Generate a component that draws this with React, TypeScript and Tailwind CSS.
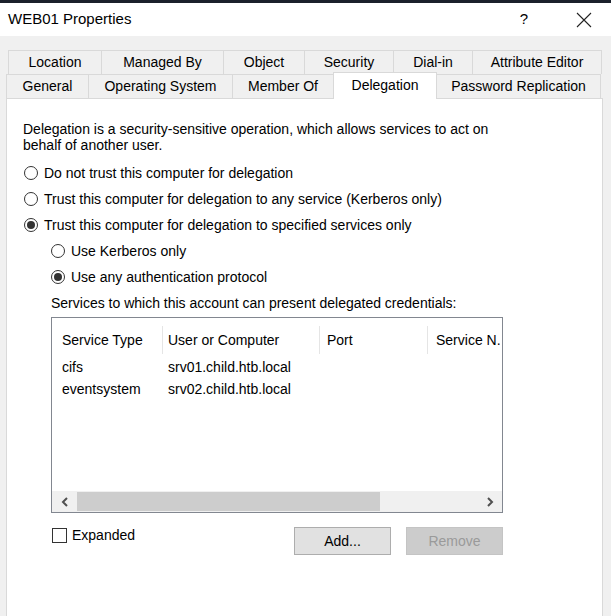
import React from 'react';

function Radio({ checked, label, indent }: { checked?: boolean; label: string; indent?: boolean }) {
  return (
    <div className={`flex items-center h-[26px] ${indent ? 'pl-[28px]' : 'pl-[1px]'}`}>
      <span className="w-[14px] h-[14px] rounded-full border border-[#333333] bg-white flex items-center justify-center shrink-0">
        {checked && <span className="w-[8px] h-[8px] rounded-full bg-[#333333]" />}
      </span>
      <span className="ml-[6px] whitespace-nowrap">{label}</span>
    </div>
  );
}

const topTabs = [
  { label: 'Location', w: 'w-[93px]' },
  { label: 'Managed By', w: 'w-[122px]' },
  { label: 'Object', w: 'w-[81px]' },
  { label: 'Security', w: 'w-[89px]' },
  { label: 'Dial-in', w: 'w-[79px]' },
  { label: 'Attribute Editor', w: 'w-[130px]' },
];

export default function App() {
  return (
    <div className="w-[611px] h-[616px] overflow-hidden bg-[#f0f0f0] text-[14px] text-black font-['Liberation_Sans',Arial,sans-serif]">
      <div className="h-[3px] bg-[#1b202b]" />

      {/* Title bar */}
      <div className="h-[33px] bg-white flex items-center pl-[8px]">
        <span className="text-[15px]">WEB01 Properties</span>
        <span className="ml-auto text-[15px] mr-[48px]">?</span>
        <svg width="16" height="16" viewBox="0 0 16 16" className="mr-[19px]">
          <path d="M1 1 L15 15 M15 1 L1 15" stroke="#222" strokeWidth="1.1" />
        </svg>
      </div>

      {/* Tabs */}
      <div className="pt-[14px]">
        <div className="flex pl-[8px] h-[24px]">
          {topTabs.map((t, i) => (
            <div
              key={t.label}
              className={`${t.w} h-full flex items-center justify-center border-t border-l border-[#d9d9d9] ${i === topTabs.length - 1 ? 'border-r' : ''}`}
            >
              {t.label}
            </div>
          ))}
        </div>
        <div className="flex pl-[6px] h-[24px] items-start">
          <div className="w-[82px] h-full flex items-center justify-center border-t border-l border-[#d9d9d9]">General</div>
          <div className="w-[144px] h-full flex items-center justify-center border-t border-l border-[#d9d9d9]">Operating System</div>
          <div className="w-[101px] h-full flex items-center justify-center border-t border-l border-[#d9d9d9]">Member Of</div>
          <div className="relative z-10 w-[104px] h-[27px] -mt-[2px] bg-white flex items-start pt-[2px] justify-center border-t border-x border-[#d9d9d9]">
            Delegation
          </div>
          <div className="w-[164px] h-full flex items-center justify-center border-t border-r border-[#d9d9d9]">Password Replication</div>
        </div>

        {/* Panel */}
        <div className="mx-[6px] w-[597px] h-[530px] bg-white border border-[#d9d9d9] pl-[16px] pt-[22px]">
          <p className="leading-[16px] w-[500px]">
            Delegation is a security-sensitive operation, which allows services to act on behalf of another user.
          </p>

          <div className="mt-[7px]">
            <Radio label="Do not trust this computer for delegation" />
            <Radio label="Trust this computer for delegation to any service (Kerberos only)" />
            <Radio checked label="Trust this computer for delegation to specified services only" />
            <Radio indent label="Use Kerberos only" />
            <Radio indent checked label="Use any authentication protocol" />
          </div>

          <div className="h-[26px] flex items-center pl-[28px]">Services to which this account can present delegated credentials:</div>

          {/* List view */}
          <div className="ml-[28px] mt-[1px] w-[452px] h-[196px] border border-[#828790] flex flex-col overflow-hidden">
            <div className="h-[38px] pt-[8px] pb-[2px] flex shrink-0">
              <div className="w-[111px] h-full flex items-center pl-[10px] border-r border-[#e5e5e5]">Service Type</div>
              <div className="w-[157px] h-full flex items-center pl-[5px] border-r border-[#e5e5e5]">User or Computer</div>
              <div className="w-[108px] h-full flex items-center pl-[7px] border-r border-[#e5e5e5]">Port</div>
              <div className="flex-1 h-full flex items-center pl-[8px] whitespace-nowrap overflow-hidden">Service N.</div>
            </div>
            <div className="h-[22px] flex items-center shrink-0">
              <span className="w-[111px] pl-[10px]">cifs</span>
              <span className="pl-[5px]">srv01.child.htb.local</span>
            </div>
            <div className="h-[22px] flex items-center shrink-0">
              <span className="w-[111px] pl-[10px]">eventsystem</span>
              <span className="pl-[5px]">srv02.child.htb.local</span>
            </div>
            <div className="flex-1" />
            {/* Horizontal scrollbar */}
            <div className="h-[21px] bg-[#f0f0f0] flex items-stretch shrink-0">
              <div className="w-[25px] flex items-center justify-center">
                <svg width="8" height="10" viewBox="0 0 8 10">
                  <path d="M6 1 L2 5 L6 9" stroke="#505050" strokeWidth="2" fill="none" />
                </svg>
              </div>
              <div className="w-[303px] my-[1px] bg-[#cdcdcd]" />
              <div className="flex-1" />
              <div className="w-[25px] flex items-center justify-center">
                <svg width="8" height="10" viewBox="0 0 8 10">
                  <path d="M2 1 L6 5 L2 9" stroke="#505050" strokeWidth="2" fill="none" />
                </svg>
              </div>
            </div>
          </div>

          {/* Bottom controls */}
          <div className="ml-[29px] w-[451px] mt-[14px] flex items-start">
            <div className="flex items-center h-[16px]">
              <span className="w-[15px] h-[15px] border border-[#333333] bg-white shrink-0" />
              <span className="ml-[5px]">Expanded</span>
            </div>
            <button className="ml-auto w-[97px] h-[28px] bg-[#e1e1e1] border border-[#adadad] text-[14px]">Add...</button>
            <button className="ml-[15px] w-[97px] h-[28px] bg-[#cccccc] border border-[#c4c4c4] text-[14px] text-[#9a9a9a]">Remove</button>
          </div>
        </div>
      </div>
    </div>
  );
}
